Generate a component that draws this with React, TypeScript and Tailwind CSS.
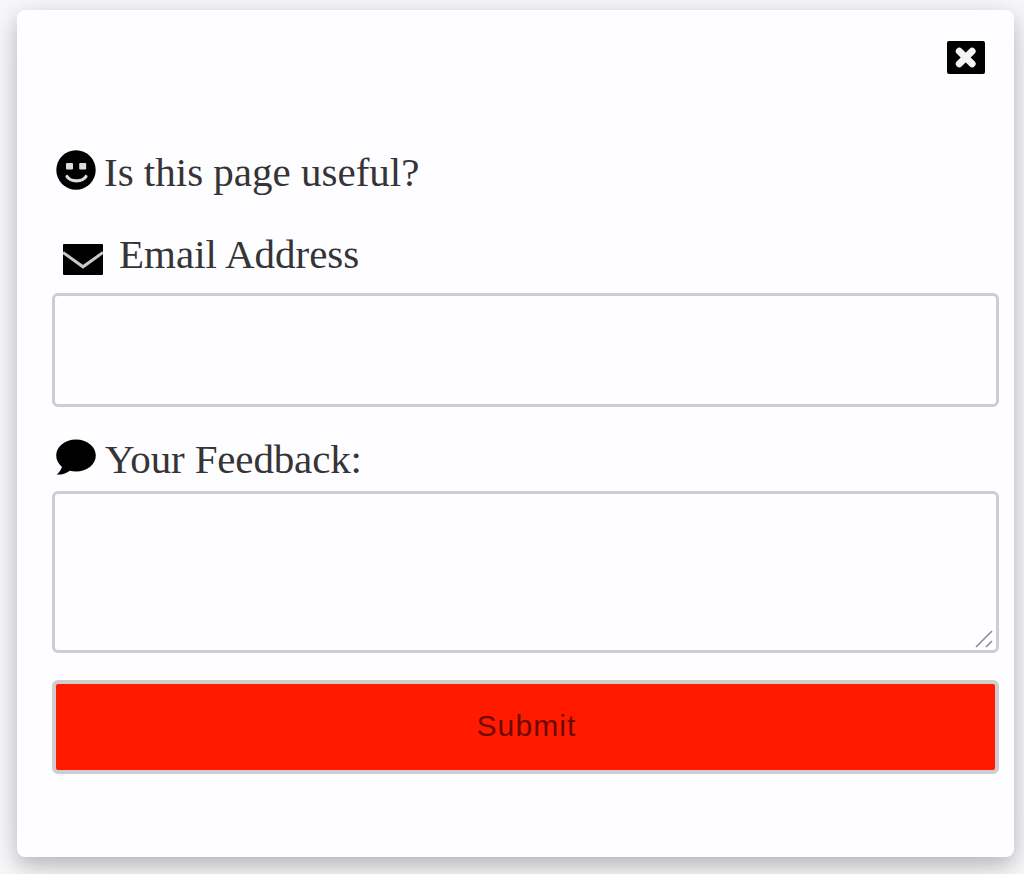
import { useState } from "react";
import type { ReactNode } from "react";

function CloseIcon() {
  return (
    <svg viewBox="0 0 38 33" className="h-[33px] w-[38px]" aria-hidden>
      <rect width="38" height="33" rx="2" fill="#000" />
      <path d="M12.3 10.3 25.1 22.7M25.1 10.3 12.3 22.7" stroke="#f4f3f5" strokeWidth="7" strokeLinecap="round" />
    </svg>
  );
}

function SmileIcon() {
  return (
    <svg viewBox="0 0 40 40" className="h-10 w-10" aria-hidden>
      <circle cx="20" cy="20" r="19.7" fill="#000" />
      <rect x="10" y="13" width="7" height="6.5" rx="1" fill="#dddcde" />
      <rect x="23.2" y="13" width="7" height="6.5" rx="1" fill="#dddcde" />
      <path d="M11 26.5C14.5 32.3 26.5 32.3 30 26.5" fill="none" stroke="#dddcde" strokeWidth="3.2" strokeLinecap="round" />
    </svg>
  );
}

function MailIcon() {
  return (
    <svg viewBox="0 0 40 31" className="h-[31px] w-10" aria-hidden>
      <rect width="40" height="31" rx="1" fill="#000" />
      <path d="M0 8.5 20 22.8 40 8.5" fill="none" stroke="#c9c8ca" strokeWidth="3" />
    </svg>
  );
}

function CommentIcon() {
  return (
    <svg viewBox="0 0 40 37" className="h-[37px] w-10" aria-hidden>
      <path
        d="M20 .5C9 .5.2 7.5.2 16.5c0 4.6 2.3 8.5 5.8 11.4-.9 2.9-2.8 5.4-5.4 7.7 6.2.2 10-1.4 13.2-3.9 2 .5 4 .8 6.2.8 11 0 19.8-7 19.8-16S31 .5 20 .5Z"
        fill="#000"
      />
    </svg>
  );
}

function FieldLabel({ icon, htmlFor, children }: { icon: ReactNode; htmlFor?: string; children: ReactNode }) {
  return (
    <label htmlFor={htmlFor} className="flex h-12 items-start text-[41px] leading-[48px] whitespace-nowrap text-[#353436]">
      {icon}
      {children}
    </label>
  );
}

export default function App() {
  const [isOpen, setIsOpen] = useState(true);
  const [email, setEmail] = useState("");
  const [feedback, setFeedback] = useState("");

  return (
    <div className="h-[874px] w-full overflow-hidden bg-[#f8f7f9] pt-2.5 pr-2.5 pl-[17px] font-['Liberation_Serif',serif]">
      {isOpen && (
        <div className="h-[847px] rounded-lg bg-[#fefdff] pt-[31px] pr-[15px] pl-[35px] shadow-[0_8px_18px_rgba(0,0,0,0.18),0_8px_40px_rgba(0,0,0,0.12)]">
          <div className="flex h-[33px] justify-end pr-3.5">
            <button type="button" aria-label="Close" onClick={() => setIsOpen(false)}>
              <CloseIcon />
            </button>
          </div>

          <form className="mt-[74px] flex flex-col" onSubmit={(event) => event.preventDefault()}>
            <FieldLabel
              icon={
                <span className="mt-0.5 mr-2 ml-1">
                  <SmileIcon />
                </span>
              }
            >
              Is this page useful?
            </FieldLabel>

            <div className="mt-[34px]">
              <FieldLabel
                htmlFor="email"
                icon={
                  <span className="mt-3.5 mr-4 ml-[11px]">
                    <MailIcon />
                  </span>
                }
              >
                Email Address
              </FieldLabel>
            </div>
            <input
              id="email"
              type="email"
              value={email}
              onChange={(event) => setEmail(event.target.value)}
              className="mt-[15px] h-[114px] rounded-md border-[3.5px] border-[#cecdcf] px-5 text-3xl outline-none"
            />

            <div className="mt-7">
              <FieldLabel
                htmlFor="feedback"
                icon={
                  <span className="mt-1 mr-[9px] ml-1">
                    <CommentIcon />
                  </span>
                }
              >
                <span className="tracking-[-0.15px]">Your Feedback:</span>
              </FieldLabel>
            </div>
            <div className="relative mt-2 h-[162px]">
              <textarea
                id="feedback"
                value={feedback}
                onChange={(event) => setFeedback(event.target.value)}
                className="block h-full w-full resize-none rounded-md border-[3.5px] border-[#cecdcf] px-5 text-3xl outline-none"
              />
              <svg viewBox="0 0 20 20" className="pointer-events-none absolute right-1 bottom-1 h-5 w-5" aria-hidden>
                <path d="M1 18 17 2M11 18 17 12" fill="none" stroke="#8f8e90" strokeWidth="1.7" />
              </svg>
            </div>

            <button
              type="submit"
              className="mt-[27px] h-[94px] rounded-md border-4 border-[#cecdcf] bg-[#ff1a00] pb-1 pl-0.5 font-['Liberation_Sans',sans-serif] text-[30px] tracking-[1.1px] text-[#6b0b00]"
            >
              Submit
            </button>
          </form>
        </div>
      )}
    </div>
  );
}
